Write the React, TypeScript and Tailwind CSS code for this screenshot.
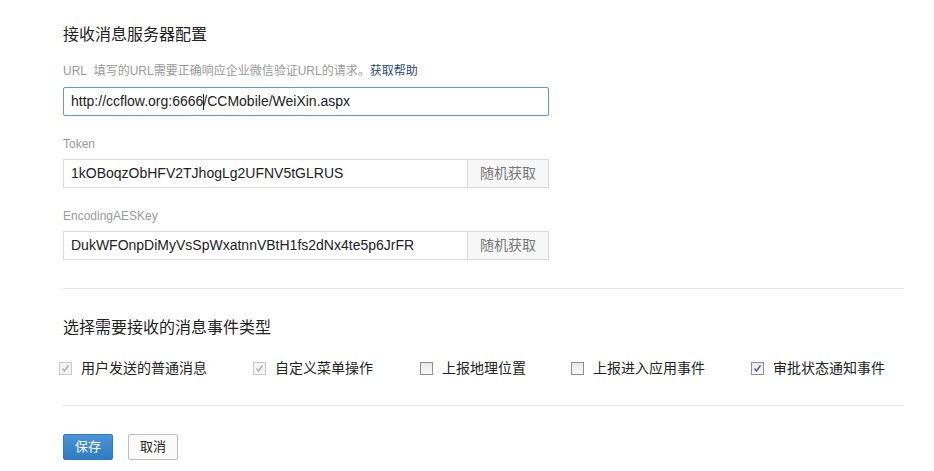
const FONT = "font-['Liberation_Sans','Noto_Sans_CJK_SC',sans-serif]";

type Item = { label: string; checked: boolean; disabled?: boolean; width: string };

const items: Item[] = [
    { label: '用户发送的普通消息', checked: true, disabled: true, width: 'w-[194px]' },
    { label: '自定义菜单操作', checked: true, disabled: true, width: 'w-[167px]' },
    { label: '上报地理位置', checked: false, width: 'w-[151px]' },
    { label: '上报进入应用事件', checked: false, width: 'w-[180px]' },
    { label: '审批状态通知事件', checked: true, width: 'w-[150px]' },
];

function Box({ checked, disabled }: { checked: boolean; disabled?: boolean }) {
    return (
        <span
            className={`flex h-[13px] w-[13px] items-center justify-center border ${
                disabled ? 'border-[#c8c8c8] bg-[#f4f4f4]' : 'border-[#8f8f8f] bg-gradient-to-b from-[#e8e8e8] to-[#fbfbfb]'
            }`}
        >
            {checked && (
                <svg width="9" height="9" viewBox="0 0 9 9">
                    <path
                        d="M1.5 4.5 L3.5 7 L7.5 1.5"
                        fill="none"
                        stroke={disabled ? '#b0b0b0' : '#4a5d8c'}
                        strokeWidth="1.4"
                    />
                </svg>
            )}
        </span>
    );
}

function KeyField({ label, value }: { label: string; value: string }) {
    return (
        <div>
            <div className="text-[12px] leading-[16px] text-[#999]">{label}</div>
            <div className="mt-[7px] flex h-[29px] w-[486px] border border-[#d9d9d9]">
                <div className="flex flex-1 items-center px-[7px] text-[14px] text-[#222]">{value}</div>
                <button className="w-[81px] border-l border-[#d9d9d9] bg-[#f7f7f7] text-[14px] text-[#777]">
                    随机获取
                </button>
            </div>
        </div>
    );
}

export default function App() {
    return (
        <div className={`${FONT} min-h-screen bg-white pl-[63px] pr-[30px] text-[#222]`}>
            <div className="pt-[26px] text-[16px] leading-[18px]">接收消息服务器配置</div>

            <div className="mt-[19px] text-[12px] leading-[16px] text-[#999]">
                URL&nbsp;&nbsp;填写的URL需要正确响应企业微信验证URL的请求。
                <span className="text-[#2a4a78]">获取帮助</span>
            </div>
            <div className="mt-[8px] flex h-[29px] w-[486px] items-center rounded-[2px] border border-[#5b9bd5] px-[7px] text-[14px] text-[#222]">
                http://ccflow.org:6666
                <span className="-mr-px inline-block h-[16px] w-px bg-[#222]" />
                /CCMobile/WeiXin.aspx
            </div>

            <div className="mt-[20px] space-y-[20px]">
                <KeyField label="Token" value="1kOBoqzObHFV2TJhogLg2UFNV5tGLRUS" />
                <KeyField label="EncodingAESKey" value="DukWFOnpDiMyVsSpWxatnnVBtH1fs2dNx4te5p6JrFR" />
            </div>

            <div className="mt-[28px] h-px w-[841px] bg-[#e6e6e6]" />

            <div className="mt-[30px] text-[16px] leading-[18px]">选择需要接收的消息事件类型</div>

            <div className="-ml-[4px] mt-[22px] flex items-center">
                {items.map((it) => (
                    <label key={it.label} className={`flex shrink-0 items-center gap-[9px] ${it.width}`}>
                        <Box checked={it.checked} disabled={it.disabled} />
                        <span className="text-[14px] leading-[18px] text-[#222]">{it.label}</span>
                    </label>
                ))}
            </div>

            <div className="mt-[28px] h-px w-[841px] bg-[#e6e6e6]" />

            <div className="mt-[28px] flex gap-[15px] pb-[10px]">
                <button className="h-[26px] w-[50px] rounded-[2px] border border-[#2f7ac0] bg-gradient-to-b from-[#4a95d8] to-[#2f7bc2] text-[13px] text-white">
                    保存
                </button>
                <button className="h-[26px] w-[50px] rounded-[2px] border border-[#bdbdbd] bg-[#fafafa] text-[13px] text-[#222]">
                    取消
                </button>
            </div>
        </div>
    );
}
